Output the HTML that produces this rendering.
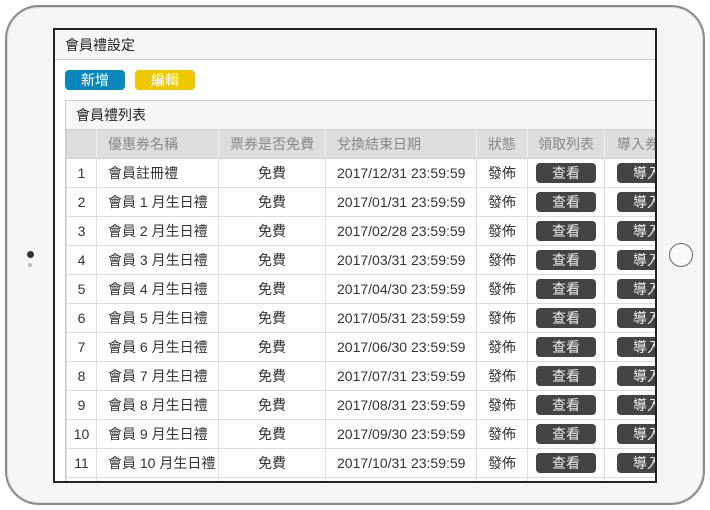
<!DOCTYPE html>
<html><head><meta charset="utf-8"><style>
*{margin:0;padding:0;box-sizing:border-box}
body{width:710px;height:510px;background:#fff;position:relative;overflow:hidden;font-family:"Liberation Sans","Noto Sans CJK TC",sans-serif}
.tab{position:absolute;left:5px;top:5px;width:700px;height:500px;border-radius:34px;background:#f5f6f7;border:2px solid #8a8a8a;box-shadow:inset 0 0 0 1px #ddd}
.cam{position:absolute;left:27px;top:251px;width:7px;height:7px;border-radius:50%;background:#333}
.cam2{position:absolute;left:28px;top:263px;width:4px;height:4px;border-radius:50%;background:#bbb}
.home{position:absolute;left:669px;top:243px;width:24px;height:24px;border-radius:50%;border:1.5px solid #666;background:#fafafa}
.scr{position:absolute;left:53px;top:28px;width:604px;height:455px;border:2px solid #222;background:#fff;overflow:hidden}
.tb{height:30px;background:#f7f7f7;border-bottom:1px solid #ccc;font-size:14px;color:#222;padding:5px 0 0 10px}
.btn{position:absolute;top:40px;width:60px;height:20px;border-radius:4px;color:#fff;font-size:14px;text-align:center;line-height:20px}
.panel{position:absolute;left:10px;top:70px;width:620px;height:400px;border:1px solid #ccc;background:#fff}
.ph{height:29px;background:#f7f7f7;border-bottom:1px solid #ddd;font-size:14px;color:#222;padding:4px 0 0 10px}
table{border-collapse:collapse;font-size:14px;color:#333;table-layout:fixed;margin-top:-1px}
td,th{height:29px;border:1px solid #ddd;text-align:center;font-weight:normal;white-space:nowrap;overflow:hidden}
th{background:#ddd;color:#888;border-color:#d0d0d0;border-right:1px solid #eee}
td.l,th.l{text-align:left;padding-left:11px}
.v{display:inline-block;width:60px;height:20px;line-height:20px;background:#444;color:#eee;border-radius:4px;vertical-align:middle}
.i{display:inline-block;width:50px;height:20px;line-height:20px;background:#444;color:#eee;border-radius:4px 0 0 4px;vertical-align:middle;margin-left:12px;text-align:left;padding-left:16px}
</style></head><body>
<div class="tab"></div>
<div class="cam"></div><div class="cam2"></div>
<div class="home"></div>
<div class="scr">
<div class="tb">會員禮設定</div>
<div class="btn" style="left:10px;background:#0a88bd">新增</div>
<div class="btn" style="left:80px;background:#eec900">編輯</div>
<div class="panel">
<div class="ph">會員禮列表</div>
<table>
<colgroup><col style="width:30px"><col style="width:122px"><col style="width:107px"><col style="width:151px"><col style="width:51px"><col style="width:77px"><col style="width:70px"></colgroup>
<tr><th></th><th class="l">優惠券名稱</th><th>票券是否免費</th><th class="l">兌換結束日期</th><th>狀態</th><th>領取列表</th><th class="l" style="padding-left:12px">導入券</th></tr>
<tr><td>1</td><td class="l">會員註冊禮</td><td>免費</td><td class="l">2017/12/31 23:59:59</td><td>發佈</td><td><span class="v">查看</span></td><td style="text-align:left"><span class="i">導入</span></td></tr>
<tr><td>2</td><td class="l">會員 1 月生日禮</td><td>免費</td><td class="l">2017/01/31 23:59:59</td><td>發佈</td><td><span class="v">查看</span></td><td style="text-align:left"><span class="i">導入</span></td></tr>
<tr><td>3</td><td class="l">會員 2 月生日禮</td><td>免費</td><td class="l">2017/02/28 23:59:59</td><td>發佈</td><td><span class="v">查看</span></td><td style="text-align:left"><span class="i">導入</span></td></tr>
<tr><td>4</td><td class="l">會員 3 月生日禮</td><td>免費</td><td class="l">2017/03/31 23:59:59</td><td>發佈</td><td><span class="v">查看</span></td><td style="text-align:left"><span class="i">導入</span></td></tr>
<tr><td>5</td><td class="l">會員 4 月生日禮</td><td>免費</td><td class="l">2017/04/30 23:59:59</td><td>發佈</td><td><span class="v">查看</span></td><td style="text-align:left"><span class="i">導入</span></td></tr>
<tr><td>6</td><td class="l">會員 5 月生日禮</td><td>免費</td><td class="l">2017/05/31 23:59:59</td><td>發佈</td><td><span class="v">查看</span></td><td style="text-align:left"><span class="i">導入</span></td></tr>
<tr><td>7</td><td class="l">會員 6 月生日禮</td><td>免費</td><td class="l">2017/06/30 23:59:59</td><td>發佈</td><td><span class="v">查看</span></td><td style="text-align:left"><span class="i">導入</span></td></tr>
<tr><td>8</td><td class="l">會員 7 月生日禮</td><td>免費</td><td class="l">2017/07/31 23:59:59</td><td>發佈</td><td><span class="v">查看</span></td><td style="text-align:left"><span class="i">導入</span></td></tr>
<tr><td>9</td><td class="l">會員 8 月生日禮</td><td>免費</td><td class="l">2017/08/31 23:59:59</td><td>發佈</td><td><span class="v">查看</span></td><td style="text-align:left"><span class="i">導入</span></td></tr>
<tr><td>10</td><td class="l">會員 9 月生日禮</td><td>免費</td><td class="l">2017/09/30 23:59:59</td><td>發佈</td><td><span class="v">查看</span></td><td style="text-align:left"><span class="i">導入</span></td></tr>
<tr><td>11</td><td class="l">會員 10 月生日禮</td><td>免費</td><td class="l">2017/10/31 23:59:59</td><td>發佈</td><td><span class="v">查看</span></td><td style="text-align:left"><span class="i">導入</span></td></tr>
<tr><td></td><td></td><td></td><td></td><td></td><td></td><td></td></tr>
</table>
</div>
</div>
</body></html>
